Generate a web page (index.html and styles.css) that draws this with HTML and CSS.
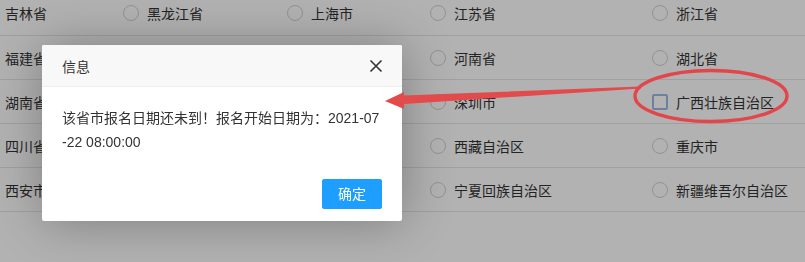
FILE: index.html
```html
<!DOCTYPE html>
<html lang="zh-CN">
<head>
    <meta charset="UTF-8">
    <meta name="viewport" content="width=device-width, initial-scale=1.0">
    <title>报名地区</title>
    <link rel="stylesheet" href="styles.css">
</head>
<body>
    <div class="area-table">
        <div class="area-row">
            <label class="area-cell"><span class="radio"></span>吉林省</label>
            <label class="area-cell"><span class="radio"></span>黑龙江省</label>
            <label class="area-cell"><span class="radio"></span>上海市</label>
            <label class="area-cell"><span class="radio"></span>江苏省</label>
            <label class="area-cell"><span class="radio"></span>浙江省</label>
        </div>
        <div class="area-row">
            <label class="area-cell"><span class="radio"></span>福建省</label>
            <label class="area-cell"></label>
            <label class="area-cell"></label>
            <label class="area-cell"><span class="radio"></span>河南省</label>
            <label class="area-cell"><span class="radio"></span>湖北省</label>
        </div>
        <div class="area-row">
            <label class="area-cell"><span class="radio"></span>湖南省</label>
            <label class="area-cell"></label>
            <label class="area-cell"></label>
            <label class="area-cell"><span class="radio"></span>深圳市</label>
            <label class="area-cell"><span class="radio radio-checked"></span>广西壮族自治区</label>
        </div>
        <div class="area-row">
            <label class="area-cell"><span class="radio"></span>四川省</label>
            <label class="area-cell"></label>
            <label class="area-cell"></label>
            <label class="area-cell"><span class="radio"></span>西藏自治区</label>
            <label class="area-cell"><span class="radio"></span>重庆市</label>
        </div>
        <div class="area-row">
            <label class="area-cell"><span class="radio"></span>西安市</label>
            <label class="area-cell"></label>
            <label class="area-cell"></label>
            <label class="area-cell"><span class="radio"></span>宁夏回族自治区</label>
            <label class="area-cell"><span class="radio"></span>新疆维吾尔自治区</label>
        </div>
    </div>

    <div class="layer-shade"></div>

    <div class="layer-dialog">
        <div class="layer-title">
            信息
            <svg class="layer-close" width="14" height="14" viewBox="0 0 14 14">
                <path d="M1.5 1.5 L12.5 12.5 M12.5 1.5 L1.5 12.5" stroke="#333" stroke-width="1.6" fill="none"/>
            </svg>
        </div>
        <div class="layer-content">该省市报名日期还未到！报名开始日期为：2021-07-22 08:00:00</div>
        <div class="layer-btns">
            <a class="layer-btn">确定</a>
        </div>
    </div>

    <!-- annotation drawn over the screenshot -->
    <svg class="mark" width="805" height="262" viewBox="0 0 805 262">
        <polygon points="385,101 404,92 404,95.5 641,86.5 641,88.5 404,104 404,109" fill="#e24a4b"/>
        <ellipse cx="711" cy="96" rx="76" ry="25.5" fill="none" stroke="#e2464b" stroke-width="3.4"/>
    </svg>
</body>
</html>
```

FILE: styles.css
```css
body {
    margin: 0;
    font-family: "Liberation Sans", "Noto Sans CJK SC", sans-serif;
    font-size: 14px;
    color: #333;
    background: #fff;
    overflow: hidden;
    height: 262px;
}

.area-table {
    margin-top: -9px;
    margin-left: -19px;
}

.area-row {
    display: grid;
    grid-template-columns: 142px 164px 143px 222px 1fr;
    height: 43px;
    border-bottom: 1px solid #e6e6e6;
}

.area-row:first-child {
    height: 44px;
}

.area-cell {
    display: flex;
    align-items: center;
    gap: 8px;
    white-space: nowrap;
}

.radio {
    width: 16px;
    height: 16px;
    border: 1px solid #d2d2d2;
    border-radius: 50%;
    box-sizing: border-box;
    flex: none;
}

.radio-checked {
    border-radius: 2px;
    border: 2px solid #9bb8e8;
}

.layer-shade {
    position: fixed;
    inset: 0;
    background: rgba(0, 0, 0, 0.3);
}

.layer-dialog {
    position: absolute;
    left: 42px;
    top: 45px;
    width: 360px;
    background: #fff;
    box-shadow: 1px 1px 50px rgba(0, 0, 0, 0.3);
    border-radius: 2px;
}

.layer-title {
    display: flex;
    align-items: center;
    justify-content: space-between;
    height: 42px;
    padding: 0 19px 0 20px;
    box-sizing: border-box;
    background: #f8f8f8;
    border-bottom: 1px solid #eee;
    border-radius: 2px 2px 0 0;
    color: #333;
}

.layer-close {
    display: block;
}

.layer-content {
    padding: 19px 20px 20px;
    line-height: 24px;
    word-break: break-all;
    color: #333;
}

.layer-btns {
    display: flex;
    justify-content: flex-end;
    padding: 5px 20px 12px;
}

.layer-btn {
    height: 28px;
    line-height: 28px;
    padding: 0 15px;
    border: 1px solid #1e9fff;
    background: #1e9fff;
    color: #fff;
    border-radius: 2px;
    cursor: pointer;
}

.mark {
    position: absolute;
    left: 0;
    top: 0;
    pointer-events: none;
}
```
